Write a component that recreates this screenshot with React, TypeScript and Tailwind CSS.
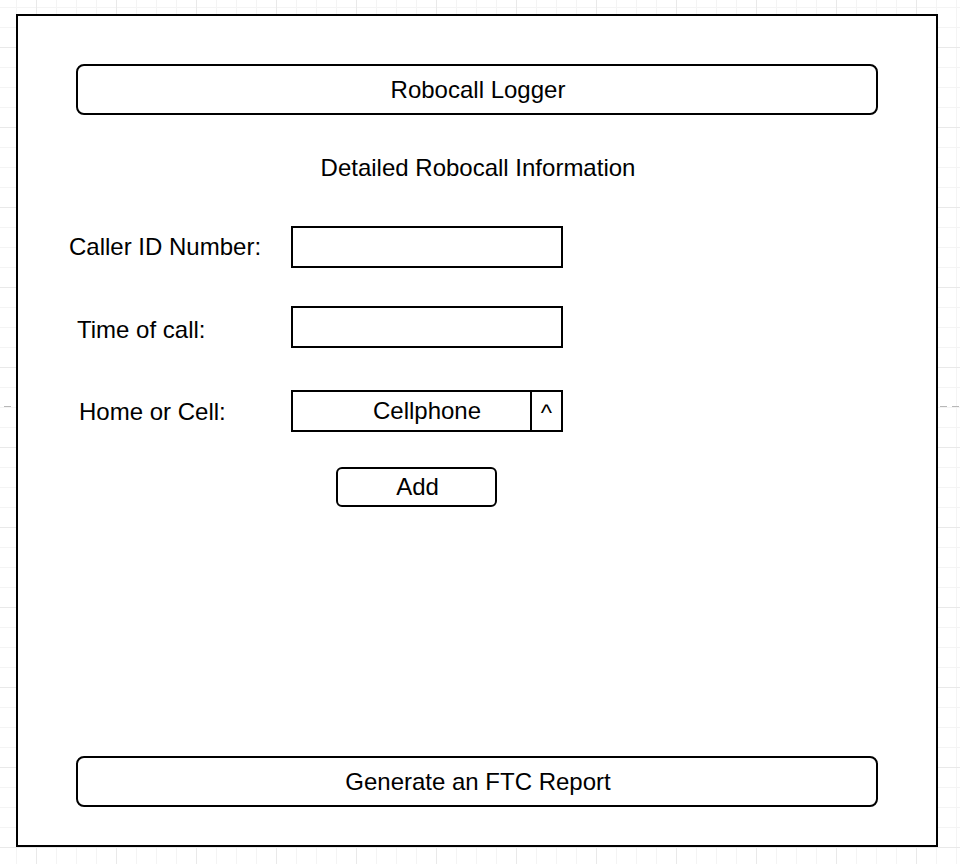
import React from "react";

export default function App() {
  return (
    <div
      className="relative w-[960px] h-[864px] overflow-hidden bg-white pl-[16px] pt-[14px] text-black [font-family:'Liberation_Sans',Arial,sans-serif] [background-image:repeating-linear-gradient(to_right,#b8b8b8_0_7px,transparent_7px_12px),linear-gradient(to_right,#e9e9e9_1px,transparent_1px),linear-gradient(to_bottom,#e9e9e9_1px,transparent_1px),linear-gradient(to_right,#f4f4f4_1px,transparent_1px),linear-gradient(to_bottom,#f4f4f4_1px,transparent_1px)] [background-size:100%_1px,80px_80px,80px_80px,20px_20px,20px_20px] [background-position:4px_406px,36px_47px,36px_47px,16px_7px,16px_7px] [background-repeat:no-repeat,repeat,repeat,repeat,repeat]"
    >
      <div className="box-border flex h-[833px] w-[922px] flex-col border-2 border-black bg-white">
        <div className="mx-[58px] mt-[48px] flex h-[51px] items-center justify-center rounded-[8px] border-2 border-black pl-[2px] text-[24px] leading-none">
          Robocall Logger
        </div>

        <div className="mt-[39px] pl-[2px] text-center text-[24px] leading-[28px]">
          Detailed Robocall Information
        </div>

        <div className="mt-[44px] flex h-[42px] items-center">
          <div className="w-[273px] pl-[51px] text-[24px] leading-none">Caller ID Number:</div>
          <div className="box-border h-[42px] w-[272px] border-2 border-black" />
        </div>

        <div className="mt-[38px] flex h-[42px] items-center">
          <div className="w-[273px] pl-[59px] pt-[5px] text-[24px] leading-none">Time of call:</div>
          <div className="box-border h-[42px] w-[272px] border-2 border-black" />
        </div>

        <div className="mt-[42px] flex h-[42px] items-center">
          <div className="w-[273px] pl-[61px] pt-[2px] text-[24px] leading-none">Home or Cell:</div>
          <div className="box-border flex h-[42px] w-[272px] border-2 border-black">
            <div className="flex flex-1 items-center justify-center pl-[31px] text-[24px] leading-none">
              Cellphone
            </div>
            <div className="box-border flex w-[31px] items-start justify-center border-l-2 border-black pt-[9px] text-[24px] leading-none">
              ^
            </div>
          </div>
        </div>

        <div className="ml-[318px] mt-[35px] box-border flex h-[40px] w-[161px] items-center justify-center rounded-[6px] border-2 border-black pl-[2px] text-[24px] leading-none">
          Add
        </div>

        <div className="flex-1" />

        <div className="mx-[58px] mb-[38px] flex h-[51px] items-center justify-center rounded-[8px] border-2 border-black pl-[2px] text-[24px] leading-none">
          Generate an FTC Report
        </div>
      </div>
    </div>
  );
}
